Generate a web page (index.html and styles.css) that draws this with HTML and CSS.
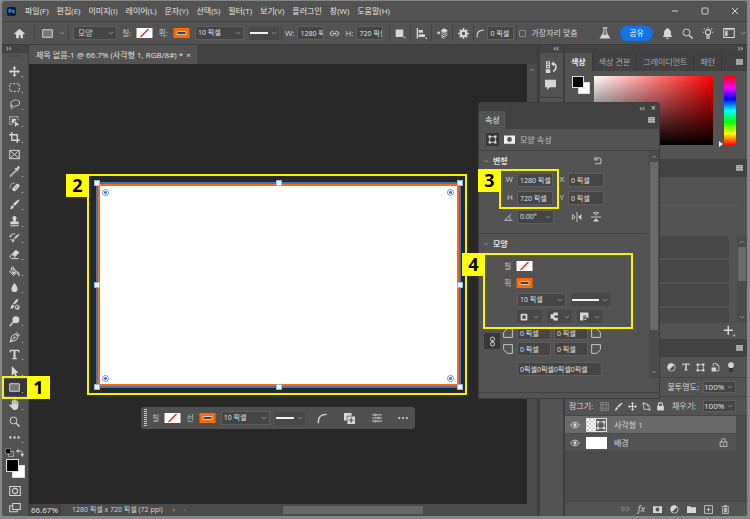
FILE: index.html
```html
<!DOCTYPE html>
<html lang="ko">

<head>
  <meta charset="utf-8">
  <title>제목 없음-1</title>
  <link rel="stylesheet" href="styles.css">
</head>

<body>
  <svg class="sprite" aria-hidden="true">
    <symbol id="i-chev" viewBox="0 0 8 8"><path d="M1 2.5l3 3 3-3" class="ln"/></symbol>
    <symbol id="i-home" viewBox="0 0 16 16"><path d="M8 1L0 8.5l1.5 1L3 8.2V15h4v-4.500h2.500V15H13V8.200l1.500 1.300L16 8.500z"/></symbol>
    <symbol id="i-rect" viewBox="0 0 16 16"><path d="M1 2.500h14v11H1z" fill="#777" stroke="currentColor" stroke-width="1.400"/></symbol>
    <symbol id="i-link" viewBox="0 0 16 16"><path d="M7 6a3 3 0 1 0 0 4M9 6a3 3 0 1 1 0 4M5 8h6" class="ln2"/></symbol>
    <symbol id="i-square" viewBox="0 0 16 16"><path d="M1 2h11v11H1zM12 15h3v-3z"/></symbol>
    <symbol id="i-align" viewBox="0 0 16 16"><path d="M1 0h2v15H1zM4 3h6v4H4zM4 9h9v4H4zM13 16h3v-3z"/></symbol>
    <symbol id="i-stack" viewBox="0 0 16 16"><path d="M0 6h2V4l3 3-3 3V8H0z"/><path d="M6 4l4.500-3L15 4l-4.500 3z"/><path d="M6 4l4.500-3L15 4l-4.500 3zM6 7l4.500 3L15 7M6 10l4.500 3 4.500-3M6 12.500l4.500 3" class="ln2"/></symbol>
    <symbol id="i-gear" viewBox="0 0 16 16"><circle cx="8" cy="8" r="4" fill="none" stroke="currentColor" stroke-width="3"/><path d="M8 0v4M8 12v4M0 8h4M12 8h4M2.500 2.500L5 5M11 11l2.500 2.500M2.500 13.500L5 11M11 5l2.500-2.500" stroke="currentColor" stroke-width="2.400"/></symbol>
    <symbol id="i-curve" viewBox="0 0 16 16"><path d="M2 15V12Q2 2 14 2" class="ln3"/></symbol>
    <symbol id="i-flask" viewBox="0 0 16 16"><path d="M5 1h6M6.500 1v6L2 14.500h12L9.500 7V1" class="ln2"/><path d="M5 10h6l2.500 4.500h-11z"/></symbol>
    <symbol id="i-bell" viewBox="0 0 16 16"><path d="M8 0c1 0 1.500.600 1.500 1.500C12 2.500 13 4.500 13 7v3l2 3H1l2-3V7c0-2.500 1-4.500 3.500-5.500C6.500.600 7 0 8 0zM6 14h4a2 2 0 0 1-4 0z"/></symbol>
    <symbol id="i-search" viewBox="0 0 16 16"><circle cx="6.500" cy="6.500" r="5" class="ln2"/><path d="M10.500 10.500l5 5" class="ln3"/></symbol>
    <symbol id="i-bulb" viewBox="0 0 16 16"><circle cx="8" cy="7" r="3.500" class="ln2"/><path d="M6.500 12h3v3h-3zM8 0v1.500M1 7h1.500M13.500 7H15M2.500 2l1.200 1.200M13.500 2l-1.200 1.200" class="ln2"/></symbol>
    <symbol id="i-layout" viewBox="0 0 16 16"><path d="M1 2h14v12H1z" class="ln2"/><path d="M3 5h3v7H3zM3 3h10v1H3z"/></symbol>
    <symbol id="i-move" viewBox="0 0 16 16"><path d="M8 0l3 3.500H9V7h3.500V5L16 8l-3.500 3V9H9v3.500h2L8 16l-3-3.500h2V9H3.500v2L0 8l3.500-3v2H7V3.500H5z"/></symbol>
    <symbol id="i-marquee" viewBox="0 0 16 16"><path d="M1 2.500h14v11H1z" class="ln2" stroke-dasharray="3 2"/></symbol>
    <symbol id="i-lasso" viewBox="0 0 16 16"><ellipse cx="9" cy="6" rx="6.500" ry="4.500" class="ln2" transform="rotate(-12 9 6)"/><path d="M4 9c-3 1-2 3 0 2.500S5 14 2.500 15" class="ln2"/></symbol>
    <symbol id="i-object" viewBox="0 0 16 16"><path d="M1 1h12v5M1 1v11h5" class="ln2" stroke-dasharray="2 1"/><path d="M4 4h6v3H7v3H4zM8 7l7 6-4 .500L9 16z"/></symbol>
    <symbol id="i-crop" viewBox="0 0 16 16"><path d="M4 0v12h12M0 4h12v12" class="ln3"/></symbol>
    <symbol id="i-frame" viewBox="0 0 16 16"><path d="M1 2h14v12H1zM1 2l14 12M15 2L1 14" class="ln2"/></symbol>
    <symbol id="i-dropper" viewBox="0 0 16 16"><path d="M10 6l-8 7.500L1.500 15l2-.500L11 7" class="ln2"/><path d="M8 3.500l4.500 4.500 1-1-1-1.500L15 3.500C16.500 1.500 14.500-.500 12.500 1L10.500 3.500 9 2.500z"/></symbol>
    <symbol id="i-heal" viewBox="0 0 16 16"><path d="M5 9l6-6a3 3 0 0 1 4 4l-6 6a3 3 0 0 1-4-4z"/><path d="M2 9c-2-4 2-8 6-7" class="ln2" stroke-dasharray="2 1"/><path d="M8 8l2 2M10 6l2 2" stroke="#535353"/></symbol>
    <symbol id="i-brush" viewBox="0 0 16 16"><path d="M15 1c1 1-5 8-7 9L6 8c1-2 8-8 9-7zM5 9l2 2c0 3-3 4-6 4 2-1 1-5 4-6z"/></symbol>
    <symbol id="i-stamp" viewBox="0 0 16 16"><path d="M8 0a3 3 0 0 1 3 3c0 2-1.500 3-1.500 5H14v4H2V8h4.500C6.500 6 5 5 5 3a3 3 0 0 1 3-3zM2 13.500h12V15H2z"/></symbol>
    <symbol id="i-history" viewBox="0 0 16 16"><path d="M15 3c1 1-4 6-6 7L7.500 8.500C8.500 7 14 2 15 3zM6.500 9.500L8 11c0 3-2 4-5 4 2-1 1-4 3.500-5.500z"/><path d="M2 7c0-4 3-5 7-4M0 5l2 2.500L4 5M2 12l2-2" class="ln2"/></symbol>
    <symbol id="i-eraser" viewBox="0 0 16 16"><path d="M10 1l5 4-5.500 6-5-4z"/><path d="M4 7.500l5 4L7 14H4l-3-2.500zM7 14h7" class="ln2"/></symbol>
    <symbol id="i-bucket" viewBox="0 0 16 16"><path d="M6 3l6 6-5 5-6-5.500zM4 6c-2-5 2-7 3-3v4" class="ln2"/><path d="M3 8h8l-4 4.500zM12 8c3 1 4 4 3 7-2-1-2-4-3-5z"/></symbol>
    <symbol id="i-drop" viewBox="0 0 16 16"><path d="M8 1c2 4 4.500 6 4.500 9a4.500 4.500 0 0 1-9 0C3.500 7 6 5 8 1z"/></symbol>
    <symbol id="i-mixer" viewBox="0 0 16 16"><path d="M13 0c2 1-3 7-5 8L6 7c1-3 6-8 7-7zM5.500 8l2 2c0 3-3 4-6 4 2-1 1-5 4-6z"/><circle cx="12" cy="12" r="3" class="ln2"/><path d="M10 14l4-4v4z"/></symbol>
    <symbol id="i-dodge" viewBox="0 0 16 16"><circle cx="10" cy="5.500" r="5"/><path d="M7 8l-6 7" class="ln3"/></symbol>
    <symbol id="i-pen" viewBox="0 0 16 16"><path d="M1.500 14.500L4 6l5-3 4 4-3 5zM2 14l5-5M10 2l4 4 1-1-4-4z" class="ln2"/><circle cx="8" cy="8" r="1.500"/></symbol>
    <symbol id="i-type" viewBox="0 0 16 16"><path d="M1 1h14v4h-1.500L13 3H9.500v10l2 .500V15h-7v-1.500l2-.500V3H3l-.500 2H1z"/></symbol>
    <symbol id="i-arrow" viewBox="0 0 16 16"><path d="M4 0l10 10H9.500l2.500 5-2.500 1L7.500 11 4 14z"/></symbol>
    <symbol id="i-hand" viewBox="0 0 16 16"><path d="M4 9V3c0-1.500 2-1.500 2 0v4h.500V1.500c0-1.500 2-1.500 2 0V7H9V2c0-1.500 2-1.500 2 0v5.500h.500V4c0-1.500 2-1.500 2 0v7c0 3-2 5-4.500 5S5 14.500 4 13L0 9c0-1.500 2-1.500 4 0z"/></symbol>
    <symbol id="i-dots" viewBox="0 0 16 16"><circle cx="2" cy="8" r="1.700"/><circle cx="8" cy="8" r="1.700"/><circle cx="14" cy="8" r="1.700"/></symbol>
    <symbol id="i-defaults" viewBox="0 0 16 16"><path d="M6 6h9v9H6z" fill="#535353" stroke="#ddd"/><path d="M1 1h9v9H1z" fill="#000" stroke="#bbb"/></symbol>
    <symbol id="i-swap" viewBox="0 0 16 16"><path d="M3 4h4c4 0 6 2 6 7" class="ln3"/><path d="M5 0v8L0 4zM9 10h7l-3.500 6z"/></symbol>
    <symbol id="i-mask" viewBox="0 0 16 16"><path d="M1 2h14v12H1z" class="ln2"/><circle cx="8" cy="8" r="3.500" class="ln2"/></symbol>
    <symbol id="i-screen" viewBox="0 0 16 16"><path d="M5 2h10v8H5zM5 5H1v8h10v-3" class="ln2"/></symbol>
    <symbol id="i-maskfill" viewBox="0 0 16 16"><path fill-rule="evenodd" d="M0 2h16v12H0zM8 4.500a3.500 3.500 0 1 0 0 7 3.500 3.500 0 0 0 0-7z"/></symbol>
    <symbol id="i-shape" viewBox="0 0 16 16"><path d="M3 3h10v10H3z" class="ln2"/><path d="M1 1h4v4H1zM11 1h4v4h-4zM1 11h4v4H1zM11 11h4v4h-4z"/></symbol>
    <symbol id="i-reset" viewBox="0 0 16 16"><path d="M4 6C6 1 13 2 13 7.500c0 3-2 4.500-4 4.500M3 1v5h5M3 12h10" class="ln3"/></symbol>
    <symbol id="i-angle" viewBox="0 0 16 16"><path d="M15 13H1L13 2M9 6c2 2 2 5 2 7" class="ln2"/></symbol>
    <symbol id="i-fliph" viewBox="0 0 16 16"><path d="M8 0v16M1 4l4 4-4 4z" class="ln2"/><path d="M15 3v10l-5-5z"/></symbol>
    <symbol id="i-flipv" viewBox="0 0 16 16"><path d="M0 8h16M4 1h8L8 5z" class="ln2"/><path d="M3 15h10l-5-5z"/></symbol>
    <symbol id="i-corner" viewBox="0 0 16 16"><path d="M1 15V7l6-6h8v14z" class="ln2"/></symbol>
    <symbol id="i-chain" viewBox="0 0 16 16"><circle cx="8" cy="4.500" r="3" class="ln2"/><circle cx="8" cy="11.500" r="3" class="ln2"/><path d="M8 6v4" class="ln2"/></symbol>
    <symbol id="i-s1" viewBox="0 0 16 16"><path d="M3 3h10v10H3z" fill="none" stroke="currentColor" stroke-width="3.500" stroke-linejoin="round"/></symbol>
    <symbol id="i-s2" viewBox="0 0 16 16"><path d="M14 1v5H8v4h6v5H6v-3H1V4h5V1z"/></symbol>
    <symbol id="i-s3" viewBox="0 0 16 16"><path d="M0 1h15v9h-4V6H6v9H0zM8 8h2v2H8zM8 12h3v2H8z"/></symbol>
    <symbol id="i-add" viewBox="0 0 16 16"><path d="M0 0h11v4H4v7H0z"/><path fill-rule="evenodd" d="M5 5h11v11H5zM9.700 7v2.700H7v1.600h2.700V14h1.600v-2.700H14V9.700h-2.700V7z"/></symbol>
    <symbol id="i-sliders" viewBox="0 0 16 16"><path d="M0 3h4M7 3h9M0 8h9M12 8h4M0 13h4M7 13h9" class="ln2"/><circle cx="5.500" cy="3" r="1.500" class="ln2"/><circle cx="10.500" cy="8" r="1.500" class="ln2"/><circle cx="5.500" cy="13" r="1.500" class="ln2"/></symbol>
    <symbol id="i-hist" viewBox="0 0 16 16"><path d="M2 1h4v3H2zM2 6h4v3H2z" class="ln2"/><path d="M1 11h6v5H1zM8 4l4-4v7z"/><path d="M11 3c5 2 5 8 0 11" class="ln3"/></symbol>
    <symbol id="i-comment" viewBox="0 0 16 16"><path d="M0 1h16v11H7l-4 4v-4H0z"/></symbol>
    <symbol id="i-adjust" viewBox="0 0 16 16"><circle cx="8" cy="8" r="6.500" class="ln2"/><path d="M12.500 3.500A6.500 6.500 0 1 0 3.500 12.500z"/></symbol>
    <symbol id="i-smart" viewBox="0 0 16 16"><path d="M4 6V1h6l4 4v9H9" class="ln2"/><path d="M1 8h8v7H1zM10 1v4h4z"/></symbol>
    <symbol id="i-dot" viewBox="0 0 16 16"><path d="M5 9h6v7H5z" fill="#333"/><circle cx="8" cy="5" r="4.500"/></symbol>
    <symbol id="i-checker" viewBox="0 0 16 16"><path d="M1 1h14v14H1zM5 1v14M11 1v14M1 5h14M1 11h14" class="ln2"/></symbol>
    <symbol id="i-artboard" viewBox="0 0 16 16"><path d="M3 0v13h13M0 3h9l4 4v9" class="ln2"/><path d="M9 3v4h4z"/></symbol>
    <symbol id="i-lock" viewBox="0 0 16 16"><path d="M4.500 7V4.500a3.500 3.500 0 0 1 7 0V7" class="ln3"/><path d="M2 7h12v8H2z"/></symbol>
    <symbol id="i-locko" viewBox="0 0 16 16"><path d="M4.500 7V4.500a3.500 3.500 0 0 1 7 0V7M2 7h12v8H2zM8 10v3" class="ln2"/></symbol>
    <symbol id="i-eye" viewBox="0 0 16 16"><path d="M1 8c4-6 10-6 14 0-4 6-10 6-14 0z" class="ln2"/><circle cx="8" cy="8" r="2.700"/></symbol>
    <symbol id="i-folder" viewBox="0 0 16 16"><path d="M0 2h6l1.500 2H16v10H0z"/></symbol>
    <symbol id="i-new" viewBox="0 0 16 16"><path d="M1 1h14v14H1zM8 4.500v7M4.500 8h7" class="ln2"/></symbol>
    <symbol id="i-trash" viewBox="0 0 16 16"><path d="M1 3h14M6 3V1h4v2M3 5v10h10V5M6 5v8M8 5v8M10 5v8" class="ln2"/></symbol>
    <symbol id="i-plus" viewBox="0 0 16 16"><path d="M7 1v12M1 7h12" class="ln3"/><path d="M13 15h3v-3z"/></symbol>
    <symbol id="i-none" viewBox="0 0 16 10"><path d="M0 0h16v10H0z" fill="#fff"/><path d="M4 9l8-8" stroke="#e02020" stroke-width="1.300"/></symbol>
    <symbol id="i-stroke" viewBox="0 0 16 10"><path d="M0 0h16v10H0z" fill="#ff6a00"/><path d="M3.500 3.500h9v3h-9z" fill="#3c4650" stroke="#d0c8c0"/></symbol>
  </svg>

  <div class="app">
    <header class="menubar">
      <span class="logo">Ps</span>
      <nav class="menus">
        <a href="#">파일(F)</a>
        <a href="#">편집(E)</a>
        <a href="#">이미지(I)</a>
        <a href="#">레이어(L)</a>
        <a href="#">문자(Y)</a>
        <a href="#">선택(S)</a>
        <a href="#">필터(T)</a>
        <a href="#">보기(V)</a>
        <a href="#">플러그인</a>
        <a href="#">창(W)</a>
        <a href="#">도움말(H)</a>
      </nav>
      <div class="winbtns">
        <button aria-label="최소화"><svg viewBox="0 0 8 8"><path d="M1 4h6" class="ln"/></svg></button>
        <button aria-label="최대화"><svg viewBox="0 0 8 8"><rect x="1" y="1" width="6" height="6" rx="1" class="ln"/></svg></button>
        <button aria-label="닫기"><svg viewBox="0 0 8 8"><path d="M1 1l6 6M7 1L1 7" class="ln"/></svg></button>
      </div>
    </header>

    <div class="options">
      <div class="group home"><button aria-label="홈"><svg class="ic11"><use href="#i-home"/></svg></button></div>
      <div class="group preset"><button aria-label="사각형 도구"><svg class="ic11"><use href="#i-rect"/></svg></button><svg class="chev"><use href="#i-chev"/></svg></div>
      <div class="group fields">
        <span class="combo mode"><select aria-label="모드"><option>모양</option></select><svg class="chev"><use href="#i-chev"/></svg></span>
        <span class="lbl">칠:</span><button class="swatch" aria-label="칠"><svg><use href="#i-none"/></svg></button>
        <span class="lbl">획:</span><button class="swatch" aria-label="획"><svg><use href="#i-stroke"/></svg></button>
        <span class="combo size"><input type="text" value="10 픽셀" aria-label="획 폭"><svg class="chev"><use href="#i-chev"/></svg></span>
        <button class="linepick" aria-label="획 유형"><i></i><svg class="chev"><use href="#i-chev"/></svg></button>
      </div>
      <div class="group dims">
        <label for="ow">W:</label><input type="text" id="ow" value="1280 픽셀">
        <svg class="ic11"><use href="#i-link"/></svg>
        <label for="oh">H:</label><input type="text" id="oh" value="720 픽셀">
      </div>
      <div class="group tool"><button aria-label="패스 작업"><svg class="ic11"><use href="#i-square"/></svg></button></div>
      <div class="group tool"><button aria-label="정렬"><svg class="ic11"><use href="#i-align"/></svg></button></div>
      <div class="group tool"><button aria-label="배열"><svg class="ic11"><use href="#i-stack"/></svg></button></div>
      <div class="group tool"><button aria-label="설정"><svg class="ic11"><use href="#i-gear"/></svg></button></div>
      <div class="group radius"><svg class="ic9"><use href="#i-curve"/></svg><input type="text" value="0 픽셀" aria-label="반경"></div>
      <label class="snap"><input type="checkbox"> 가장자리 맞춤</label>
      <div class="right">
        <button aria-label="베타"><svg class="ic12"><use href="#i-flask"/></svg></button>
        <button class="share">공유</button>
        <button aria-label="알림"><svg class="ic11"><use href="#i-bell"/></svg></button>
        <button aria-label="검색"><svg class="ic11"><use href="#i-search"/></svg></button>
        <button aria-label="도움말"><svg class="ic12"><use href="#i-bulb"/></svg></button>
        <button class="ws" aria-label="작업 영역"><svg class="ic12"><use href="#i-layout"/></svg><svg class="chev"><use href="#i-chev"/></svg></button>
      </div>
    </div>

    <main class="work">
      <aside class="tools">
        <div class="barhead">››</div>
        <div class="grip"></div>
        <div class="toollist">
          <button aria-label="이동"><svg><use href="#i-move"/></svg></button>
          <button aria-label="선택 윤곽"><svg><use href="#i-marquee"/></svg></button>
          <button aria-label="올가미"><svg><use href="#i-lasso"/></svg></button>
          <button aria-label="개체 선택"><svg><use href="#i-object"/></svg></button>
          <button aria-label="자르기"><svg><use href="#i-crop"/></svg></button>
          <button class="single" aria-label="프레임"><svg><use href="#i-frame"/></svg></button>
          <button aria-label="스포이드"><svg><use href="#i-dropper"/></svg></button>
          <button aria-label="복구 브러시"><svg><use href="#i-heal"/></svg></button>
          <button aria-label="브러시"><svg><use href="#i-brush"/></svg></button>
          <button aria-label="도장"><svg><use href="#i-stamp"/></svg></button>
          <button aria-label="작업 내역 브러시"><svg><use href="#i-history"/></svg></button>
          <button aria-label="지우개"><svg><use href="#i-eraser"/></svg></button>
          <button aria-label="페인트 통"><svg><use href="#i-bucket"/></svg></button>
          <button aria-label="흐림"><svg><use href="#i-drop"/></svg></button>
          <button class="single" aria-label="혼합 브러시"><svg><use href="#i-mixer"/></svg></button>
          <button aria-label="닷지"><svg><use href="#i-dodge"/></svg></button>
          <button aria-label="펜"><svg><use href="#i-pen"/></svg></button>
          <button aria-label="문자"><svg><use href="#i-type"/></svg></button>
          <button aria-label="패스 선택"><svg><use href="#i-arrow"/></svg></button>
          <button class="on" aria-label="사각형"><svg><use href="#i-rect"/></svg><span class="mark m1"><b>1</b></span></button>
          <button aria-label="손"><svg><use href="#i-hand"/></svg></button>
          <button class="single" aria-label="돋보기"><svg><use href="#i-search"/></svg></button>
          <button aria-label="도구 모음 편집"><svg><use href="#i-dots"/></svg></button>
        </div>
        <div class="swaprow">
          <button aria-label="기본 색상"><svg class="ic9"><use href="#i-defaults"/></svg></button>
          <button aria-label="색상 전환"><svg class="ic8"><use href="#i-swap"/></svg></button>
        </div>
        <div class="fgbg"><i class="bg"></i><i class="fg"></i></div>
        <button class="extra" aria-label="빠른 마스크"><svg class="ic12"><use href="#i-mask"/></svg></button>
        <button class="extra" aria-label="화면 모드"><svg class="ic12"><use href="#i-screen"/></svg></button>
      </aside>

      <section class="doc">
        <div class="tabs"><div class="doctab">제목 없음-1 @ 66.7% (사각형 1, RGB/8#) *<button aria-label="문서 닫기">×</button></div></div>
        <div class="docbody">
          <div class="canvas">
            <div class="mark m2"><b>2</b></div>
            <div class="artboard">
              <i class="h nw"></i><i class="h n"></i><i class="h ne"></i><i class="h w"></i>
              <i class="h e"></i><i class="h sw"></i><i class="h s"></i><i class="h se"></i>
              <i class="r nw"></i><i class="r ne"></i><i class="r sw"></i><i class="r se"></i>
            </div>
            <div class="context">
              <i class="dragger"></i>
              <span class="lbl">칠</span><button class="swatch" aria-label="칠"><svg><use href="#i-none"/></svg></button>
              <span class="lbl">선</span><button class="swatch" aria-label="선"><svg><use href="#i-stroke"/></svg></button>
              <span class="combo size"><input type="text" value="10 픽셀" aria-label="선 폭"><svg class="chev"><use href="#i-chev"/></svg></span>
              <button class="linepick" aria-label="선 유형"><i></i><svg class="chev"><use href="#i-chev"/></svg></button>
              <div class="acts">
                <button aria-label="모퉁이"><svg class="ic11"><use href="#i-curve"/></svg></button>
                <button aria-label="추가"><svg class="ic11"><use href="#i-add"/></svg></button>
                <button aria-label="속성"><svg class="ic10"><use href="#i-sliders"/></svg></button>
                <button aria-label="더 보기"><svg class="ic10"><use href="#i-dots"/></svg></button>
              </div>
            </div>
          </div>
          <div class="vscroll"><svg class="chev up"><use href="#i-chev"/></svg></div>
        </div>
        <footer class="status">
          <input type="text" value="66.67%" aria-label="배율">
          <span class="info">1280 픽셀 x 720 픽셀 (72 ppi)</span>
          <span class="next">›</span>
          <span class="prev">‹</span>
          <div class="hscroll"><i></i></div>
        </footer>
      </section>

      <aside class="strip">
        <div class="barhead">‹‹</div>
        <div class="stripbox">
          <div class="grip"></div>
          <button aria-label="작업 내역"><svg class="ic12"><use href="#i-hist"/></svg></button>
          <button aria-label="주석"><svg class="ic11"><use href="#i-comment"/></svg></button>
        </div>
        <div class="stripbox"></div>
      </aside>

      <aside class="panels">
        <div class="barhead">››</div>
        <div class="ptabs">
          <button class="sel">색상</button><button>색상 견본</button><button>그레이디언트</button><button>패턴</button>
          <i class="burger"></i>
        </div>
        <div class="color">
          <div class="fgbg"><i class="bg"></i><i class="fg"></i></div>
          <div class="field"></div>
          <div class="hue"></div>
        </div>
        <div class="ptabs plain"><i class="burger"></i></div>
        <div class="adjust">
          <div class="rule"></div>
          <div class="presets">
            <div class="cards"><i></i><i></i><i></i><i></i></div>
            <div class="sb"><svg class="chev up"><use href="#i-chev"/></svg><i></i><svg class="chev"><use href="#i-chev"/></svg></div>
          </div>
          <div class="addrow"><button aria-label="추가"><svg class="ic12"><use href="#i-plus"/></svg></button></div>
        </div>
        <div class="ptabs plain"><i class="burger"></i></div>
        <div class="layers">
          <div class="lrow filter">
            <button aria-label="조정"><svg class="ic9"><use href="#i-adjust"/></svg></button>
            <button aria-label="문자"><svg class="ic8"><use href="#i-type"/></svg></button>
            <button aria-label="모양"><svg class="ic9"><use href="#i-shape"/></svg></button>
            <button aria-label="고급 개체"><svg class="ic9"><use href="#i-smart"/></svg></button>
            <button aria-label="필터 켜기"><svg class="ic10"><use href="#i-dot"/></svg></button>
          </div>
          <div class="lrow opacity">
            <label for="op">불투명도:</label>
            <span class="combo pct"><input type="text" id="op" value="100%"><svg class="chev"><use href="#i-chev"/></svg></span>
          </div>
          <div class="lrow locks">
            <span>잠그기:</span>
            <div class="lockset">
              <svg class="ic9 dim"><use href="#i-checker"/></svg><svg class="ic9"><use href="#i-brush"/></svg><svg class="ic9"><use href="#i-move"/></svg><svg class="ic9"><use href="#i-artboard"/></svg><svg class="ic9"><use href="#i-lock"/></svg>
            </div>
            <label for="fl">채우기:</label>
            <span class="combo pct"><input type="text" id="fl" value="100%"><svg class="chev"><use href="#i-chev"/></svg></span>
          </div>
          <div class="list">
            <div class="layer cur"><svg class="ic10"><use href="#i-eye"/></svg><span class="thumb shape"><svg class="ic10"><use href="#i-shape"/></svg></span>사각형 1</div>
            <div class="layer"><svg class="ic10"><use href="#i-eye"/></svg><span class="thumb"></span>배경<svg class="ic9 lk"><use href="#i-locko"/></svg></div>
          </div>
          <div class="lfoot">
            <button class="dim" aria-label="연결"><svg class="ic10"><use href="#i-link"/></svg></button>
            <button class="fx" aria-label="레이어 스타일">fx</button>
            <button aria-label="마스크"><svg class="ic9"><use href="#i-maskfill"/></svg></button>
            <button aria-label="조정 레이어"><svg class="ic9"><use href="#i-adjust"/></svg></button>
            <button aria-label="그룹"><svg class="ic9"><use href="#i-folder"/></svg></button>
            <button aria-label="새 레이어"><svg class="ic9"><use href="#i-new"/></svg></button>
            <button aria-label="삭제"><svg class="ic9"><use href="#i-trash"/></svg></button>
          </div>
        </div>
      </aside>
    </main>

    <!-- floating properties panel -->
    <section class="props">
      <div class="phead"><span>‹‹</span><button aria-label="닫기">×</button></div>
      <div class="ptabs"><button class="sel">속성</button><i class="burger"></i></div>
      <div class="kind"><span class="box"><svg class="ic9"><use href="#i-shape"/></svg></span><svg class="ic11"><use href="#i-maskfill"/></svg><span>모양 속성</span></div>
      <div class="pbody">
        <div class="pcol">
          <div class="sec">
            <h3><svg class="chev"><use href="#i-chev"/></svg>변형<button class="reset" aria-label="재설정"><svg class="ic10"><use href="#i-reset"/></svg></button></h3>
            <div class="xywh">
              <label for="pw">W</label><input type="text" id="pw" value="1280 픽셀">
              <label for="px">X</label><input type="text" id="px" value="0 픽셀">
              <label for="ph">H</label><input type="text" id="ph" value="720 픽셀">
              <label for="py">Y</label><input type="text" id="py" value="0 픽셀">
            </div>
            <div class="rot">
              <svg class="ic9"><use href="#i-angle"/></svg>
              <span class="combo"><input type="text" value="0.00°" aria-label="각도"><svg class="chev"><use href="#i-chev"/></svg></span>
              <button aria-label="가로로 뒤집기"><svg class="ic10"><use href="#i-fliph"/></svg></button>
              <button aria-label="세로로 뒤집기"><svg class="ic10"><use href="#i-flipv"/></svg></button>
            </div>
          </div>
          <div class="sec look">
            <h3><svg class="chev"><use href="#i-chev"/></svg>모양</h3>
            <div class="prow"><span class="lbl">칠</span><button class="swatch" aria-label="칠"><svg><use href="#i-none"/></svg></button></div>
            <div class="prow"><span class="lbl">획</span><button class="swatch" aria-label="획"><svg><use href="#i-stroke"/></svg></button></div>
            <div class="prow ind"><span class="combo size"><input type="text" value="10 픽셀" aria-label="획 폭"><svg class="chev"><use href="#i-chev"/></svg></span><button class="linepick" aria-label="획 유형"><i></i><svg class="chev"><use href="#i-chev"/></svg></button></div>
            <div class="prow ind trio">
              <button aria-label="맞춤"><svg class="ic8"><use href="#i-s1"/></svg><svg class="chev"><use href="#i-chev"/></svg></button>
              <button aria-label="끝"><svg class="ic9"><use href="#i-s2"/></svg><svg class="chev"><use href="#i-chev"/></svg></button>
              <button aria-label="모퉁이"><svg class="ic9"><use href="#i-s3"/></svg><svg class="chev"><use href="#i-chev"/></svg></button>
            </div>
            <div class="corners">
              <button class="chainbtn" aria-label="모퉁이 연결"><svg class="ic11"><use href="#i-chain"/></svg></button>
              <svg class="ic10"><use href="#i-corner"/></svg><input type="text" value="0 픽셀" aria-label="왼쪽 위"><input type="text" value="0 픽셀" aria-label="오른쪽 위"><svg class="ic10 fx1"><use href="#i-corner"/></svg>
              <svg class="ic10 fy1"><use href="#i-corner"/></svg><input type="text" value="0 픽셀" aria-label="왼쪽 아래"><input type="text" value="0 픽셀" aria-label="오른쪽 아래"><svg class="ic10 fxy"><use href="#i-corner"/></svg>
              <input class="all" type="text" value="0픽셀0픽셀0픽셀0픽셀" aria-label="모퉁이 반경">
            </div>
          </div>
        </div>
        <div class="sb"><svg class="chev up"><use href="#i-chev"/></svg><i></i><svg class="chev"><use href="#i-chev"/></svg></div>
      </div>
      <div class="pfoot"></div>
      <div class="mark m3"><b>3</b></div>
      <div class="mark m4"><b>4</b></div>
    </section>
  </div>
</body>

</html>
```

FILE: styles.css
```css
* {
  box-sizing: border-box;
}

body {
  margin: 0;
  background: #8a8c8c;
  color: #d6d6d6;
  font: 8px/12px "Open Sans", "Noto Sans CJK KR", sans-serif;
}

.sprite {
  display: none;
}

.ln,
.ln2,
.ln3 {
  fill: none;
  stroke: currentColor;
  stroke-width: 1;
}

.ln2 {
  stroke-width: 1.4;
}

.ln3 {
  stroke-width: 2;
}

svg {
  display: block;
  flex: none;
  fill: currentColor;
}

button,
input,
select {
  font: inherit;
  color: inherit;
  background: none;
  border: 0;
  padding: 0;
  margin: 0;
  min-width: 0;
  appearance: none;
}

input[type=text] {
  height: 14px;
  padding-left: 2px;
  background: #454545;
  border: 1px solid #5e5e5e;
  color: #e4e4e4;
  font-size: 7px;
}

a {
  color: inherit;
  text-decoration: none;
}

.ic8 { width: 8px; height: 8px; }
.ic9 { width: 9px; height: 9px; }
.ic10 { width: 10px; height: 10px; }
.ic11 { width: 11px; height: 11px; }
.ic12 { width: 12px; height: 12px; }

.chev {
  width: 6px;
  height: 6px;
  color: #a0a0a0;
}

.up {
  transform: rotate(180deg);
}

.dim {
  color: #8a8a8a;
}

.app {
  display: flex;
  flex-direction: column;
  position: relative;
  height: 100vh;
  background: #535353;
  border: solid #858787;
  border-width: 1px 3px 3px 2px;
  border-radius: 5px;
}

/* menu */
.menubar {
  display: flex;
  align-items: center;
  height: 21px;
  padding: 0 5px;
  border-bottom: 1px solid #414141;
}

.logo {
  width: 9px;
  height: 9px;
  background: #001e36;
  color: #31a8ff;
  border-radius: 2px;
  font-size: 6px;
  font-weight: bold;
  line-height: 8px;
  text-align: center;
}

.menus {
  display: flex;
  gap: 8px;
  margin-left: 9px;
  color: #e4e4e4;
}

.winbtns {
  display: flex;
  gap: 22px;
  margin-left: auto;
  padding-right: 3px;
}

.winbtns svg {
  width: 8px;
  height: 8px;
}

/* options */
.options {
  display: flex;
  align-items: center;
  height: 23px;
  border-bottom: 1px solid #3d3d3d;
}

.group {
  display: flex;
  align-items: center;
  height: 16px;
  border-right: 1px solid #434343;
}

.home {
  width: 33px;
  padding-left: 12px;
}

.preset {
  width: 34px;
  gap: 6px;
  padding-left: 7px;
}

.combo {
  display: flex;
  align-items: center;
  height: 14px;
  background: #454545;
  border: 1px solid #5e5e5e;
}

.combo input[type=text],
.combo select {
  flex: 1;
  width: 0;
  height: 12px;
  border: 0;
  background: none;
}

.combo .chev {
  margin: 0 2px;
}

.mode {
  width: 44px;
}

.mode select {
  padding-left: 4px;
}

.fields {
  gap: 5px;
  padding: 0 2px 0 4px;
}

.lbl {
  color: #c0c0c0;
}

.swatch {
  width: 17px;
  height: 10px;
}

.swatch svg {
  width: 17px;
  height: 10px;
}

.size {
  width: 49px;
}

.linepick {
  display: flex;
  align-items: center;
  gap: 3px;
  width: 30px;
  height: 13px;
  padding: 0 2px 0 1px;
  background: #484848;
}

.linepick i {
  flex: 1;
  height: 2px;
  background: #f0f0f0;
}

.dims {
  gap: 3px;
  padding: 0 6px 0 3px;
}

.dims input {
  width: 27px;
}

.dims svg {
  margin: 0 2px;
}

.tool {
  width: 21px;
  justify-content: center;
}

.radius {
  gap: 2px;
  padding: 0 2px;
}

.radius input {
  width: 27px;
}

.snap {
  display: flex;
  align-items: center;
  gap: 5px;
  padding-left: 2px;
  white-space: nowrap;
}

.snap input {
  width: 7px;
  height: 7px;
  border: 1px solid #8a8a8a;
  border-radius: 1px;
}

.snap input:checked {
  background: #1473e6;
}

.right {
  display: flex;
  align-items: center;
  gap: 9px;
  margin-left: auto;
}

.share {
  width: 33px;
  height: 15px;
  border-radius: 8px;
  background: #1473e6;
  color: #fff;
}

.ws {
  display: flex;
  align-items: center;
  gap: 5px;
  padding-right: 1px;
}

/* work area */
.work {
  display: flex;
  flex: 1;
  min-height: 0;
}

.barhead {
  height: 8px;
  padding: 0 4px;
  background: #434343;
  font-size: 9px;
  line-height: 6px;
}

.grip {
  width: 12px;
  height: 3px;
  margin: 2px auto;
  border-top: 2px dotted #474747;
}

.tools {
  display: flex;
  flex-direction: column;
  width: 27px;
  border-right: 1px solid #414141;
}

.toollist {
  display: grid;
  grid-auto-rows: 1fr;
  flex: 1;
  margin-top: 3px;
}

.toollist button {
  position: relative;
  display: flex;
  align-items: center;
  padding-left: 7px;
}

.toollist svg {
  width: 11px;
  height: 11px;
}

.toollist button:not(.single)::after {
  content: "";
  align-self: flex-end;
  width: 1px;
  height: 1px;
  margin: 0 0 3px 2px;
  background: #ccc;
}

.toollist .on {
  z-index: 1;
  background: #383838;
}

.swaprow {
  display: flex;
  justify-content: space-between;
  padding: 2px 4px 2px 3px;
}

.fgbg {
  display: grid;
  grid-template: 6px 6px 6px / 6px 6px 6px;
}

.fgbg i {
  border: 1px solid #ddd;
}

.fgbg .fg {
  grid-area: 1 / 1 / 3 / 3;
  background: #000;
}

.fgbg .bg {
  grid-area: 2 / 2 / 4 / 4;
  background: #fff;
}

.tools .fgbg {
  grid-template: 6px 7px 6px / 6px 7px 6px;
  margin: 0 0 4px 4px;
}

.extra {
  height: 17px;
  padding-left: 7px;
}

.doc {
  display: flex;
  flex-direction: column;
  flex: 1;
  min-width: 0;
}

.tabs {
  display: flex;
  height: 19px;
  background: #424242;
}

.doctab {
  display: flex;
  align-items: center;
  gap: 3px;
  padding: 0 6px 0 7px;
  background: #535353;
  color: #e4e4e4;
  white-space: nowrap;
}

.docbody {
  display: flex;
  flex: 1;
  min-height: 0;
}

.canvas {
  position: relative;
  flex: 1;
  background: #282828;
}

.vscroll {
  width: 10px;
  padding: 3px 2px;
  background: #4b4b4b;
}

.artboard {
  position: absolute;
  left: 67px;
  top: 118px;
  width: 365px;
  height: 206px;
  background: #fff;
  border: 2px solid #3f74c8;
  outline: 2px solid #ff6a00;
  outline-offset: -4px;
}

.artboard i {
  position: absolute;
}

.artboard .h {
  width: 6px;
  height: 6px;
  background: #fff;
  border: 1px solid #8ab4f0;
}

.h.nw, .h.n, .h.ne { top: -4px; }
.h.sw, .h.s, .h.se { bottom: -4px; }
.h.nw, .h.w, .h.sw { left: -4px; }
.h.ne, .h.e, .h.se { right: -4px; }
.h.n, .h.s { left: calc(50% - 3px); }
.h.w, .h.e { top: calc(50% - 3px); }

.artboard .r {
  width: 7px;
  height: 7px;
  border: 1px solid #5b92dc;
  border-radius: 50%;
  background: radial-gradient(circle, #3b7bd4 1px, #fff 2px);
}

.r.nw, .r.ne { top: 5px; }
.r.sw, .r.se { bottom: 4px; }
.r.nw, .r.sw { left: 4px; }
.r.ne, .r.se { right: 5px; }

.context {
  position: absolute;
  left: 112px;
  top: 343px;
  display: flex;
  align-items: center;
  gap: 5px;
  width: 274px;
  height: 22px;
  padding: 0 7px 0 3px;
  background: #505050;
  border-radius: 3px;
}

.dragger {
  width: 3px;
  height: 18px;
  background: repeating-linear-gradient(#ccc 0 1px, transparent 1px 2px);
}

.acts {
  display: flex;
  flex: 1;
  justify-content: space-between;
  align-items: center;
  padding-left: 7px;
}

.status {
  display: flex;
  align-items: center;
  height: 12px;
  background: #4b4b4b;
  font-size: 7px;
}

.status input[type=text] {
  flex: none;
  width: 32px;
  height: 12px;
  border: 0;
  background: #424242;
  font-size: 8px;
}

.info {
  padding-left: 11px;
  white-space: nowrap;
}

.next {
  margin: 0 9px 0 10px;
}

.prev {
  color: #888;
}

.hscroll {
  flex: 1;
  padding-left: 19%;
}

.hscroll i {
  display: block;
  width: 55%;
  height: 8px;
  background: #686868;
}

.strip {
  width: 28px;
  border: solid #3e3e3e;
  border-width: 0 2px 0 3px;
  background: #535353;
}

.strip .barhead {
  text-align: right;
}

.stripbox {
  min-height: 43px;
  border-bottom: 1px solid #3e3e3e;
}

.stripbox .grip {
  margin: 2px auto;
}

.stripbox button {
  display: block;
  margin: 3px 0 6px 5px;
}

/* right panels */
.panels {
  display: flex;
  flex-direction: column;
  width: 182px;
}

.panels .barhead {
  text-align: right;
}

.ptabs {
  display: flex;
  align-items: center;
  height: 18px;
  background: #424242;
  color: #a8a8a8;
}

.ptabs button {
  height: 100%;
  padding: 0 6px;
  border-right: 1px solid #3a3a3a;
  white-space: nowrap;
}

.ptabs .sel {
  background: #535353;
  color: #eee;
  font-weight: bold;
}

.burger {
  width: 7px;
  height: 6px;
  margin: 0 4px 0 auto;
  background: repeating-linear-gradient(#b0b0b0 0 1px, #989898 1px 2px);
}

.color {
  display: flex;
  height: 88px;
  padding: 5px 11px 14px 7px;
}

.field {
  flex: 1;
  margin: 0 11px 0 4px;
  background: linear-gradient(to bottom, transparent, #000), linear-gradient(to right, #fff, #f00);
}

.hue {
  position: relative;
  width: 12px;
  background: linear-gradient(#f00, #f0f, #00f, #0ff, #0f0, #ff0, #f00);
}

.hue::before {
  content: "";
  position: absolute;
  right: 100%;
  bottom: -2px;
  margin-right: 1px;
  border: 3px solid transparent;
  border-left: 4px solid #eee;
  border-right: 0;
}

.adjust {
  display: flex;
  flex-direction: column;
  height: 162px;
}

.rule {
  height: 29px;
  margin-right: 8px;
  border-bottom: 1px solid #5e5e5e;
}

.presets {
  display: flex;
  justify-content: space-between;
  height: 87px;
  margin-top: 30px;
  overflow: hidden;
}

.cards {
  flex: 1;
  margin-right: 8px;
}

.cards i {
  display: block;
  height: 22px;
  margin-bottom: 2px;
  background: #484848;
  border-radius: 2px;
}

.sb {
  display: flex;
  flex-direction: column;
  align-items: center;
  gap: 2px;
  width: 10px;
  padding: 3px 0;
  background: #4b4b4b;
}

.sb i {
  width: 8px;
  height: 34px;
  background: #6a6a6a;
}

.sb .chev:last-child {
  margin-top: auto;
}

.addrow {
  padding: 2px 12px;
}

.addrow button {
  display: block;
  margin-left: auto;
}

.layers {
  display: flex;
  flex-direction: column;
  flex: 1;
  min-height: 0;
}

.lrow {
  display: flex;
  align-items: center;
  justify-content: flex-end;
  height: 19px;
  padding: 0 11px 0 4px;
  border-bottom: 1px solid #464646;
  white-space: nowrap;
}

.filter {
  gap: 6px;
  height: 21px;
}

.opacity {
  gap: 4px;
}

.locks {
  gap: 4px;
  justify-content: space-between;
}

.lockset {
  display: flex;
  gap: 5px;
}

.pct {
  width: 33px;
  height: 12px;
}

.pct input[type=text] {
  padding-left: 0;
  font-size: 8px;
}

.list {
  flex: 1;
  background: #4b4b4b;
}

.layer {
  display: flex;
  align-items: center;
  gap: 5px;
  height: 18px;
  margin-right: 11px;
  padding: 0 8px 0 5px;
  background: #535353;
  border-bottom: 1px solid #4b4b4b;
}

.cur {
  background: #6a6a6a;
}

.thumb {
  width: 21px;
  height: 12px;
  margin: 0 2px 0 1px;
  background: #fff;
}

.shape {
  display: flex;
  justify-content: flex-end;
  height: 14px;
  border: 1px solid #ddd;
  background: repeating-conic-gradient(#ccc 0 25%, #fff 0 50%) 0 0 / 4px 4px;
}

.shape svg {
  background: #555;
  height: 12px;
}

.lk {
  margin-left: auto;
}

.lfoot {
  display: flex;
  align-items: center;
  justify-content: flex-end;
  gap: 8px;
  height: 15px;
  padding-right: 17px;
  border-top: 1px solid #434343;
}

.fx {
  font-size: 9px;
  font-style: italic;
}

/* properties */
.props {
  position: absolute;
  top: 101px;
  right: 87px;
  width: 182px;
  height: 297px;
  display: flex;
  flex-direction: column;
  background: #535353;
  border: 1px solid #3c3c3c;
  border-radius: 3px 3px 0 0;
}

.props .sel {
  font-weight: normal;
}

.phead {
  display: flex;
  align-items: center;
  justify-content: flex-end;
  gap: 6px;
  height: 8px;
  padding-right: 3px;
  background: #424242;
  font-size: 9px;
  line-height: 7px;
}

.kind {
  display: flex;
  align-items: center;
  gap: 5px;
  height: 22px;
  padding-left: 7px;
  border-bottom: 1px solid #434343;
  color: #c0c0c0;
}

.box {
  padding: 2px;
  background: #383838;
  color: #ddd;
}

.kind > svg {
  color: #eee;
}

.pbody {
  display: flex;
  flex: 1;
  min-height: 0;
}

.pcol {
  flex: 1;
}

.pbody .sb {
  height: 227px;
}

.pbody .sb i {
  height: 168px;
}

.sec {
  height: 83px;
  margin-right: 2px;
  border-bottom: 1px solid #434343;
}

.look {
  height: auto;
  border: 0;
}

.sec h3 {
  display: flex;
  align-items: center;
  gap: 4px;
  height: 20px;
  margin: 0;
  padding-left: 4px;
  color: #e4e4e4;
  font-size: 8px;
}

.reset {
  margin-left: auto;
  padding-right: 44px;
  color: #aaa;
}

.xywh {
  display: grid;
  grid-template-columns: 9px 36px 7px 36px;
  gap: 4px 4px;
  padding: 2px 0 0 25px;
}

.xywh label {
  text-align: right;
}

.rot {
  display: flex;
  align-items: center;
  height: 24px;
  gap: 4px;
  padding-left: 25px;
}

.rot .combo {
  width: 37px;
}

.rot button {
  margin-left: 5px;
}

.rot .combo + button {
  margin-left: 14px;
}

.prow {
  display: flex;
  align-items: center;
  gap: 5px;
  height: 17px;
  padding-left: 25px;
}

.sec h3 + .prow {
  margin-top: 3px;
}

.ind {
  padding-left: 38px;
}

.prow .linepick {
  width: 39px;
}

.trio button {
  display: flex;
  align-items: center;
  justify-content: space-around;
  width: 25px;
  height: 13px;
  background: #484848;
}

.corners {
  display: grid;
  grid-template-columns: 16px 11px 34px 34px 11px;
  align-items: center;
  gap: 2px 3px;
  padding: 1px 0 0 5px;
}

.chainbtn {
  grid-row: 1 / 3;
  display: flex;
  align-items: center;
  justify-content: center;
  height: 16px;
  background: #383838;
}

.corners .all {
  grid-column: 3 / 6;
  margin-top: 4px;
}

.fx1 { transform: scaleX(-1); }
.fy1 { transform: scaleY(-1); }
.fxy { transform: scale(-1); }

.pfoot {
  height: 6px;
  border-top: 1px solid #434343;
}

/* numbered callouts */
.mark {
  position: absolute;
  border: 2px solid #f8f400;
  pointer-events: none;
}

.mark b {
  position: absolute;
  width: 23px;
  height: 23px;
  background: #ff0;
  color: #000;
  font: bold 18px/23px "Open Sans", sans-serif;
  text-align: center;
}

.m1 {
  inset: -3px -1px -3px 0;
}

.m1 b {
  left: 100%;
  top: -2px;
}

.m2 {
  left: 58px;
  top: 110px;
  width: 380px;
  height: 221px;
}

.m2 b {
  right: 100%;
  top: -2px;
}

.m3 {
  left: 20px;
  top: 66px;
  width: 60px;
  height: 40px;
}

.m3 b,
.m4 b {
  right: 100%;
  top: -2px;
}

.m4 {
  left: 4px;
  top: 150px;
  width: 150px;
  height: 76px;
}
```
